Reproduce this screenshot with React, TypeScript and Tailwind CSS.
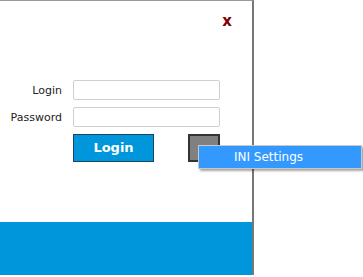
export default function App() {
  return (
    <div className="relative h-[277px] w-[363px] bg-white font-['DejaVu_Sans',sans-serif] text-[#222]">
      <div className="flex h-[275px] w-[254px] flex-col border-r-2 border-t border-[#777] border-t-[#999]">
        {/* close */}
        <div className="flex justify-end pr-[20px] pt-[13px]">
          <span className="text-[15px] font-bold leading-none text-[#7f0000]">x</span>
        </div>

        {/* form */}
        <div className="mt-[51px] grid grid-cols-[62px_147px] gap-x-[11px] gap-y-[7px]">
          <label className="self-center text-right text-[11px] leading-none">Login</label>
          <input className="h-[20px] rounded-[2px] border border-[#cfcfcf] bg-white outline-none" />
          <label className="self-center text-right text-[11px] leading-none">Password</label>
          <input
            type="password"
            className="h-[20px] rounded-[2px] border border-[#cfcfcf] bg-white outline-none"
          />
          <div />
          <div className="flex items-start justify-between">
            <button className="h-[28px] w-[81px] border border-[#1d4560] bg-[#0096db] text-[13px] font-bold text-white">
              Login
            </button>
            <button className="h-[28px] w-[32px] border-2 border-[#333] bg-[#808080] text-[11px] leading-none text-white">
              ...
            </button>
          </div>
        </div>

        {/* footer band */}
        <div className="mt-auto h-[53px] bg-[#0096db]" />
      </div>

      {/* context menu */}
      <div className="absolute left-[198px] top-[145px] flex h-[24px] w-[164px] items-center border border-[#c8c8c8] bg-[#3399ff] pl-[35px] text-[12px] text-white shadow-[2px_2px_2px_rgba(0,0,0,0.35)]">
        INI Settings
      </div>
    </div>
  );
}
